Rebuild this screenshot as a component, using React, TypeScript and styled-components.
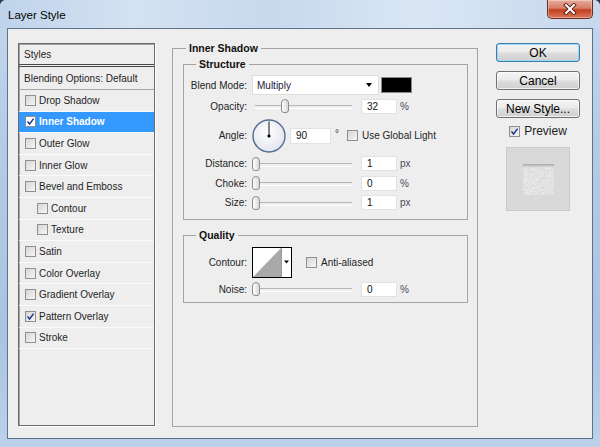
import React from 'react';
import styled, { createGlobalStyle } from 'styled-components';

const GlobalStyle = createGlobalStyle`
  html, body {
    margin: 0;
    padding: 0;
    background: #2c3540;
  }
  body {
    font-family: "Liberation Sans", Arial, sans-serif;
  }
  * {
    box-sizing: border-box;
  }
`;

const Window = styled.div`
  width: 600px;
  height: 447px;
  display: flex;
  flex-direction: column;
  border-radius: 6px 6px 0 0;
  overflow: hidden;
  background: linear-gradient(180deg, #c4d8ed 0%, #b5cce6 30%, #a9c3e1 75%, #bcd2eb 100%);
`;

const TitleBar = styled.div`
  height: 28px;
  flex: none;
  display: flex;
  justify-content: space-between;
  padding-left: 8px;
  background: linear-gradient(90deg, #bed3ea 0%, #d4e2f2 22%, #c7d9ed 45%, #dae6f4 70%, #c5d8ec 100%);
`;

const Title = styled.span`
  align-self: center;
  margin-top: 1px;
  font-size: 11.5px;
  color: #000;
`;

const CloseButton = styled.div`
  width: 46px;
  height: 19px;
  margin-right: 7px;
  display: flex;
  align-items: center;
  justify-content: center;
  border: 1px solid #6e2a22;
  border-top: none;
  border-radius: 0 0 5px 5px;
  background: linear-gradient(180deg, #e8ab9d 0%, #d67c68 45%, #c3401f 55%, #d9785c 100%);
  box-shadow: inset 0 0 0 1px rgba(255, 255, 255, 0.35);
`;

const Body = styled.div`
  height: 411px;
  flex: none;
  margin: 0 7px;
  border: 1px solid #60728a;
  background: #eeeeee;
  display: flex;
  align-items: flex-start;
  padding: 14px 0 0 10px;
  font-size: 10px;
  color: #1e1e1e;
`;

/* left list of styles */

const StylesPanel = styled.div`
  width: 137px;
  height: 383px;
  flex: none;
  border: 1px solid #6a6a6a;
  box-shadow: inset 1px 1px 0 #a2a2a2, 1px 1px 0 #fff;
  display: flex;
  flex-direction: column;
`;

const PanelHeader = styled.div`
  height: 23px;
  padding-left: 5px;
  display: flex;
  align-items: center;
  border-bottom: 3px double #4a4a4a;
`;

const BlendingRow = styled.div`
  height: 23px;
  padding-left: 5px;
  display: flex;
  align-items: center;
  border-bottom: 1px solid #a8a8a8;
`;

const StyleItem = styled.div<{ $indent?: boolean; $selected?: boolean }>`
  height: 21.6px;
  flex: none;
  display: flex;
  align-items: center;
  padding-left: ${(p) => (p.$indent ? 18 : 6)}px;
  border-bottom: 1px solid #fafafa;
  background: ${(p) => (p.$selected ? '#3399ff' : 'transparent')};
  color: ${(p) => (p.$selected ? '#fff' : 'inherit')};
  font-weight: ${(p) => (p.$selected ? 'bold' : 'normal')};
`;

const Box = styled.span<{ $selected?: boolean }>`
  width: 11px;
  height: 11px;
  flex: none;
  display: inline-flex;
  align-items: center;
  justify-content: center;
  margin-right: 3px;
  border: 1px solid #8e8f8f;
  background: ${(p) => (p.$selected ? '#fff' : 'linear-gradient(135deg, #d6d6d6 0%, #f6f6f6 100%)')};
`;

const Checkbox = ({ checked, selected }: { checked?: boolean; selected?: boolean }) => (
  <Box $selected={selected}>
    {checked && (
      <svg width="9" height="9" viewBox="0 0 9 9">
        <path d="M1.5 4.6 L3.6 7 L7.6 1.6" fill="none" stroke="#21398a" strokeWidth="1.5" />
      </svg>
    )}
  </Box>
);

/* middle group boxes */

const Group = styled.fieldset<{ $w: number; $h?: number; $mt?: number }>`
  margin: ${(p) => p.$mt ?? 0}px 0 0 0;
  padding: 0;
  min-inline-size: 0;
  width: ${(p) => p.$w}px;
  height: ${(p) => (p.$h ? `${p.$h}px` : 'auto')};
  border: 1px solid #a4a4a4;
  flex: none;
`;

const Legend = styled.legend<{ $offset: number }>`
  margin-left: ${(p) => p.$offset}px;
  padding: 0 3px;
  font-weight: bold;
  font-size: 10.5px;
  line-height: 12px;
  color: #111;
`;

const OuterContent = styled.div`
  padding: 4px 9px 0 10px;
`;

const GroupContent = styled.div<{ $pb: number }>`
  display: flex;
  flex-direction: column;
  padding-bottom: ${(p) => p.$pb}px;
`;

const Row = styled.div<{ $h: number; $mt?: number }>`
  display: flex;
  align-items: center;
  height: ${(p) => p.$h}px;
  margin-top: ${(p) => p.$mt ?? 0}px;
`;

const Label = styled.span`
  width: 63px;
  flex: none;
  margin-right: 5px;
  text-align: right;
  color: #242424;
`;

const SelectBox = styled.div`
  width: 127px;
  height: 20px;
  display: flex;
  align-items: center;
  justify-content: space-between;
  padding: 0 6px 0 4px;
  background: #fff;
  border: 1px solid #dedede;
  color: #1a1a3a;
`;

const Caret = styled.span`
  width: 0;
  height: 0;
  border-left: 3.5px solid transparent;
  border-right: 3.5px solid transparent;
  border-top: 4px solid #000;
`;

const Swatch = styled.span`
  width: 31px;
  height: 16px;
  margin-left: 2px;
  background: #000;
  border: 1px solid #8a8a8a;
`;

const SliderTrack = styled.div`
  position: relative;
  width: 100px;
  height: 14px;
  flex: none;

  &::before {
    content: '';
    position: absolute;
    left: 3px;
    right: 0;
    top: 6px;
    height: 2px;
    border-top: 1px solid #b6b6b6;
    border-bottom: 1px solid #fff;
  }
`;

const Thumb = styled.span`
  position: absolute;
  top: 0;
  width: 8px;
  height: 14px;
  border: 1px solid #8c8c8c;
  border-radius: 4px 4px 3px 3px;
  background: linear-gradient(90deg, #ffffff 0%, #d8d8d8 100%);
`;

const Slider = ({ value }: { value: number }) => (
  <SliderTrack>
    <Thumb style={{ left: `${(value / 100) * 92}px` }} />
  </SliderTrack>
);

const NumberField = styled.div<{ $w?: number; $ml?: number }>`
  width: ${(p) => p.$w ?? 36}px;
  height: ${(p) => (p.$w ? 16 : 15)}px;
  margin-left: ${(p) => p.$ml ?? 9}px;
  padding-left: 5px;
  display: flex;
  align-items: center;
  background: #fff;
  border: 1px solid #e2e2e2;
  color: #111;
`;

const Unit = styled.span`
  margin-left: 3px;
  color: #4a4a5e;
`;

const Degree = styled.span`
  align-self: flex-start;
  margin: 11px 0 0 4px;
  color: #333;
`;

const InlineCheck = styled.span<{ $ml: number }>`
  display: flex;
  align-items: center;
  margin-left: ${(p) => p.$ml}px;

  & > span:first-child {
    margin-right: 4px;
  }
`;

/* right column */

const SideColumn = styled.div`
  width: 84px;
  margin-left: 18px;
  display: flex;
  flex-direction: column;
  align-items: center;
  gap: 9px;
`;

const Button = styled.div<{ $primary?: boolean }>`
  width: 84px;
  height: 19px;
  display: flex;
  align-items: center;
  justify-content: center;
  font-size: 12px;
  color: #000;
  border-radius: 3px;
  border: 1px solid ${(p) => (p.$primary ? '#3c7fb1' : '#707070')};
  background: linear-gradient(180deg, #f4f4f4 0%, #ebebeb 48%, #dddddd 52%, #cfcfcf 100%);
  box-shadow: inset 0 0 0 1px ${(p) => (p.$primary ? '#9fd6f2' : 'rgba(255,255,255,0.7)')};
`;

const PreviewRow = styled.div`
  display: flex;
  align-items: center;
  margin-top: -3px;
  font-size: 12px;

  & > span:first-child {
    margin-right: 4px;
  }
`;

const PreviewBox = styled.div`
  width: 64px;
  height: 64px;
  display: flex;
  align-items: center;
  justify-content: center;
  background: #d9d9d9;
  border: 1px solid #cacaca;
`;

const PreviewSwatch = styled.div`
  width: 31px;
  height: 31px;
  background: #f4f4f4;
  overflow: hidden;
`;

const layerStyles = [
  { name: 'Drop Shadow' },
  { name: 'Inner Shadow', checked: true, selected: true },
  { name: 'Outer Glow' },
  { name: 'Inner Glow' },
  { name: 'Bevel and Emboss' },
  { name: 'Contour', indent: true },
  { name: 'Texture', indent: true },
  { name: 'Satin' },
  { name: 'Color Overlay' },
  { name: 'Gradient Overlay' },
  { name: 'Pattern Overlay', checked: true },
  { name: 'Stroke' },
];

const sliderRows = [
  { label: 'Distance:', value: 0, text: '1', unit: 'px' },
  { label: 'Choke:', value: 0, text: '0', unit: '%' },
  { label: 'Size:', value: 0, text: '1', unit: 'px' },
];

const AngleDial = () => (
  <svg width="34" height="34" viewBox="0 0 34 34">
    <defs>
      <radialGradient id="dialFill" cx="45%" cy="40%" r="60%">
        <stop offset="0%" stopColor="#ffffff" />
        <stop offset="100%" stopColor="#e2e5ee" />
      </radialGradient>
    </defs>
    <circle cx="17" cy="17" r="16" fill="url(#dialFill)" stroke="#566b93" strokeWidth="1.4" />
    <line x1="17" y1="17" x2="17" y2="2.5" stroke="#3a3a3a" strokeWidth="1.2" />
    <circle cx="17" cy="17" r="1.6" fill="#000" />
  </svg>
);

const ContourPicker = () => (
  <svg width="40" height="31" viewBox="0 0 40 31">
    <rect x="0.5" y="0.5" width="39" height="30" fill="#fff" stroke="#000" />
    <polygon points="1,30 29,1 29,30" fill="#a9a9a9" />
    <line x1="29.5" y1="1" x2="29.5" y2="30" stroke="#9a9a9a" />
    <polygon points="32,13.5 37,13.5 34.5,16.5" fill="#000" />
  </svg>
);

const CloseGlyph = () => (
  <svg width="14" height="12" viewBox="0 0 14 12">
    <g strokeLinecap="square">
      <path d="M3 2 L11 10 M11 2 L3 10" stroke="#4a1810" strokeWidth="3.8" />
      <path d="M3 2 L11 10 M11 2 L3 10" stroke="#fff" strokeWidth="2" />
    </g>
  </svg>
);

const NoiseSwatch = () => (
  <svg width="31" height="31" viewBox="0 0 31 31">
    <defs>
      <filter id="speckle" x="0" y="0" width="100%" height="100%">
        <feTurbulence type="fractalNoise" baseFrequency="1.3" numOctaves="2" seed="4" />
        <feColorMatrix type="saturate" values="0" />
        <feComponentTransfer>
          <feFuncA type="linear" slope="0" intercept="1" />
        </feComponentTransfer>
      </filter>
      <linearGradient id="innerShade" x1="0" y1="0" x2="0" y2="1">
        <stop offset="0" stopColor="#9a9a9a" stopOpacity="0.8" />
        <stop offset="0.12" stopColor="#9a9a9a" stopOpacity="0" />
      </linearGradient>
    </defs>
    <rect width="31" height="31" fill="#f7f7f7" />
    <rect width="31" height="31" filter="url(#speckle)" opacity="0.35" />
    <rect width="31" height="31" fill="url(#innerShade)" />
  </svg>
);

export default function App() {
  return (
    <>
      <GlobalStyle />
      <Window>
        <TitleBar>
          <Title>Layer Style</Title>
          <CloseButton>
            <CloseGlyph />
          </CloseButton>
        </TitleBar>
        <Body>
          <StylesPanel>
            <PanelHeader>Styles</PanelHeader>
            <BlendingRow>Blending Options: Default</BlendingRow>
            {layerStyles.map(({ name, checked, selected, indent }) => (
              <StyleItem key={name} $indent={indent} $selected={selected}>
                <Checkbox checked={checked} selected={selected} />
                {name}
              </StyleItem>
            ))}
          </StylesPanel>

          <Group $w={306} $h={385} $mt={-1} style={{ marginLeft: 17 }}>
            <Legend $offset={13}>Inner Shadow</Legend>
            <OuterContent>
              <Group $w={285}>
                <Legend $offset={12}>Structure</Legend>
                <GroupContent $pb={6.5}>
                  <Row $h={20} $mt={5}>
                    <Label>Blend Mode:</Label>
                    <SelectBox>
                      Multiply
                      <Caret />
                    </SelectBox>
                    <Swatch />
                  </Row>
                  <Row $h={22}>
                    <Label>Opacity:</Label>
                    <Slider value={32} />
                    <NumberField>32</NumberField>
                    <Unit>%</Unit>
                  </Row>
                  <Row $h={37}>
                    <Label>Angle:</Label>
                    <AngleDial />
                    <NumberField $w={41} $ml={4}>90</NumberField>
                    <Degree>°</Degree>
                    <InlineCheck $ml={8}>
                      <Checkbox />
                      Use Global Light
                    </InlineCheck>
                  </Row>
                  {sliderRows.map(({ label, value, text, unit }) => (
                    <Row key={label} $h={19.5}>
                      <Label>{label}</Label>
                      <Slider value={value} />
                      <NumberField>{text}</NumberField>
                      <Unit>{unit}</Unit>
                    </Row>
                  ))}
                </GroupContent>
              </Group>

              <Group $w={285} $mt={9}>
                <Legend $offset={12}>Quality</Legend>
                <GroupContent $pb={2}>
                  <Row $h={31} $mt={6}>
                    <Label>Contour:</Label>
                    <ContourPicker />
                    <InlineCheck $ml={14}>
                      <Checkbox />
                      Anti-aliased
                    </InlineCheck>
                  </Row>
                  <Row $h={22}>
                    <Label>Noise:</Label>
                    <Slider value={0} />
                    <NumberField>0</NumberField>
                    <Unit>%</Unit>
                  </Row>
                </GroupContent>
              </Group>
            </OuterContent>
          </Group>

          <SideColumn>
            <Button $primary>OK</Button>
            <Button>Cancel</Button>
            <Button>New Style...</Button>
            <PreviewRow>
              <Checkbox checked />
              Preview
            </PreviewRow>
            <PreviewBox>
              <PreviewSwatch>
                <NoiseSwatch />
              </PreviewSwatch>
            </PreviewBox>
          </SideColumn>
        </Body>
      </Window>
    </>
  );
}
